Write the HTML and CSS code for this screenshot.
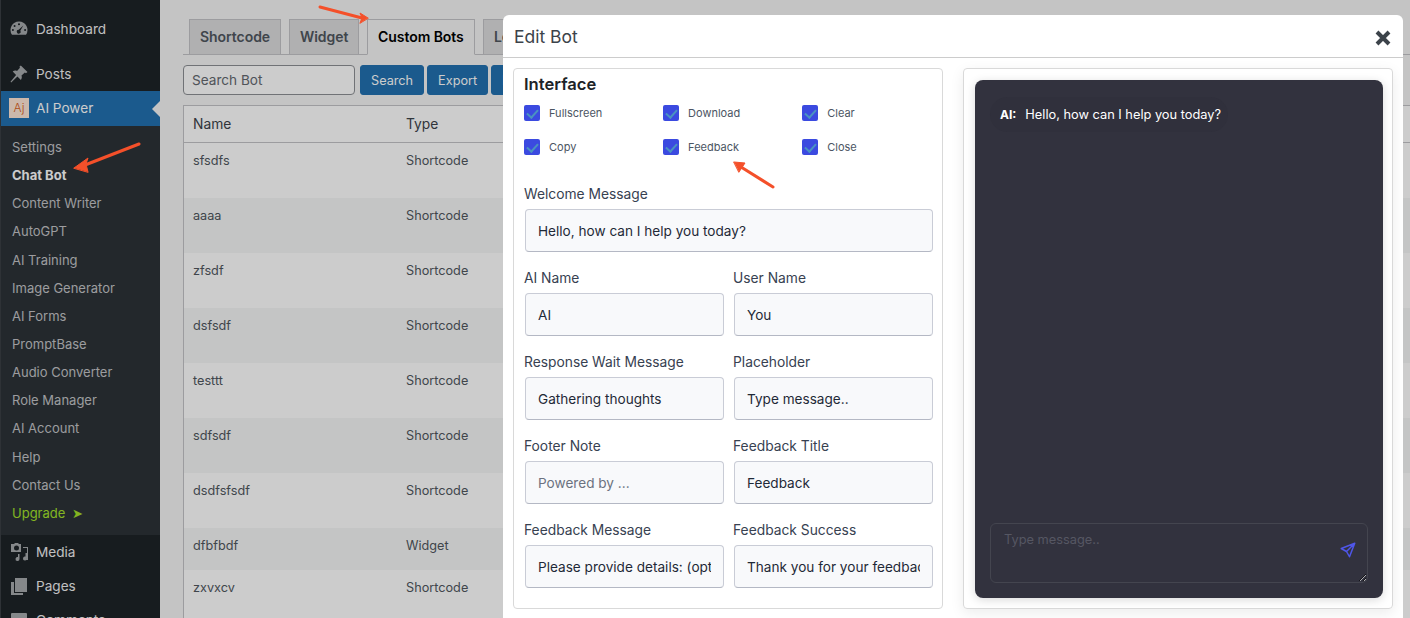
FILE: index.html
```html
<!DOCTYPE html>
<html lang="en">
<head>
    <meta charset="UTF-8">
    <title>Edit Bot</title>
    <link rel="stylesheet" href="styles.css">
</head>
<body>
    <div class="page">
        <div class="sidebar">
            <a class="menu-item first">
                <svg class="menu-icon" viewBox="0 0 20 20"><path d="M10 2.500a8.500 8.500 0 0 0-7 13.300h14A8.500 8.500 0 0 0 10 2.500zM10 4.200a1 1 0 1 1 0 2.100 1 1 0 0 1 0-2.100zM5.600 6a1 1 0 1 1 0 2 1 1 0 0 1 0-2zM14.300 6.500l-3 5.200a1.900 1.900 0 1 1-1.600-.9zM3.900 10a1 1 0 1 1 0 2 1 1 0 0 1 0-2zM16.100 10a1 1 0 1 1 0 2 1 1 0 0 1 0-2z"/></svg>
                Dashboard
            </a>
            <a class="menu-item posts">
                <svg class="menu-icon" viewBox="0 0 20 20"><path d="M11.800 1.500l6.700 6.600-1.600 1.100-1-.6-3.400 3c.6 1.700.4 3.100-.6 4.300l-3.500-3.500-6.200 6-.7-.7 5.600-6.700-3.400-3.400c1.200-1 2.700-1.300 4.300-.6l3-3.300-.6-1z"/></svg>
                Posts
            </a>
            <a class="menu-item active">
                <span class="plugin-logo">Aj</span>
                AI Power
            </a>
            <div class="submenu">
                <a>Settings</a>
                <a class="current">Chat Bot</a>
                <a>Content Writer</a>
                <a>AutoGPT</a>
                <a>AI Training</a>
                <a>Image Generator</a>
                <a>AI Forms</a>
                <a>PromptBase</a>
                <a>Audio Converter</a>
                <a>Role Manager</a>
                <a>AI Account</a>
                <a>Help</a>
                <a>Contact Us</a>
                <a class="upgrade">Upgrade<span class="upgrade-arrow">➤</span></a>
            </div>
            <a class="menu-item">
                <svg class="menu-icon" viewBox="0 0 20 20"><path d="M2 2h3l1-1h3l1 1h2v8H2zM7.500 3.500a2.500 2.500 0 1 0 0 5 2.500 2.500 0 0 0 0-5zM14 5h5v13h-2l1-1V6h-4zM18 11v5.500a2 2 0 1 1-1.500-1.900V11zM10.500 12v5a2 2 0 1 1-1.500-1.900V12z"/></svg>
                Media
            </a>
            <a class="menu-item">
                <svg class="menu-icon" viewBox="0 0 20 20"><path d="M6 2h12v14H6zM2 6h3v11h9v2H2z"/></svg>
                Pages
            </a>
            <a class="menu-item">
                <svg class="menu-icon" viewBox="0 0 20 20"><path d="M3 3h14a1 1 0 0 1 1 1v10a1 1 0 0 1-1 1h-6l-4 4v-4H3a1 1 0 0 1-1-1V4a1 1 0 0 1 1-1z"/></svg>
                Comments
            </a>
        </div>

        <div class="content">
            <div class="tabs">
                <a class="tab">Shortcode</a>
                <a class="tab">Widget</a>
                <a class="tab tab-active">Custom Bots</a>
                <a class="tab">Leads</a>
            </div>
            <div class="toolbar">
                <input class="search" type="text" placeholder="Search Bot">
                <button class="btn">Search</button>
                <button class="btn">Export</button>
                <button class="btn">Import</button>
            </div>
            <table class="bots">
                <thead>
                    <tr><th class="col-name">Name</th><th>Type</th></tr>
                </thead>
                <tbody>
                    <tr><td>sfsdfs</td><td>Shortcode</td></tr>
                    <tr><td>aaaa</td><td>Shortcode</td></tr>
                    <tr><td>zfsdf</td><td>Shortcode</td></tr>
                    <tr><td>dsfsdf</td><td>Shortcode</td></tr>
                    <tr><td>testtt</td><td>Shortcode</td></tr>
                    <tr><td>sdfsdf</td><td>Shortcode</td></tr>
                    <tr><td>dsdfsfsdf</td><td>Shortcode</td></tr>
                    <tr class="short"><td>dfbfbdf</td><td>Widget</td></tr>
                    <tr><td>zxvxcv</td><td>Shortcode</td></tr>
                </tbody>
            </table>
        </div>
    </div>

    <div class="overlay"></div>

    <div class="modal">
        <div class="modal-head">
            <span class="modal-title">Edit Bot</span>
            <svg class="modal-close" viewBox="0 0 18 18"><path d="M3 3l12 12M15 3L3 15"/></svg>
        </div>
        <div class="modal-body">
            <div class="panel form-panel">
                <h3>Interface</h3>
                <div class="checks">
                    <label class="check"><input type="checkbox" checked>Fullscreen</label>
                    <label class="check"><input type="checkbox" checked>Download</label>
                    <label class="check"><input type="checkbox" checked>Clear</label>
                    <label class="check"><input type="checkbox" checked>Copy</label>
                    <label class="check"><input type="checkbox" checked>Feedback</label>
                    <label class="check"><input type="checkbox" checked>Close</label>
                </div>
                <div class="fields">
                    <div class="field wide">
                        <label>Welcome Message</label>
                        <input type="text" value="Hello, how can I help you today?">
                    </div>
                    <div class="field">
                        <label>AI Name</label>
                        <input type="text" value="AI">
                    </div>
                    <div class="field">
                        <label>User Name</label>
                        <input type="text" value="You">
                    </div>
                    <div class="field">
                        <label>Response Wait Message</label>
                        <input type="text" value="Gathering thoughts">
                    </div>
                    <div class="field">
                        <label>Placeholder</label>
                        <input type="text" value="Type message..">
                    </div>
                    <div class="field">
                        <label>Footer Note</label>
                        <input type="text" placeholder="Powered by ...">
                    </div>
                    <div class="field">
                        <label>Feedback Title</label>
                        <input type="text" value="Feedback">
                    </div>
                    <div class="field">
                        <label>Feedback Message</label>
                        <input type="text" value="Please provide details: (optional)">
                    </div>
                    <div class="field">
                        <label>Feedback Success</label>
                        <input type="text" value="Thank you for your feedback!">
                    </div>
                </div>
            </div>
            <div class="panel preview-panel">
                <div class="chat">
                    <div class="chat-log">
                        <div class="bubble"><b>AI:</b>Hello, how can I help you today?</div>
                    </div>
                    <div class="chat-input">
                        <textarea placeholder="Type message.."></textarea>
                        <svg class="send" viewBox="0 0 24 24"><path d="M21 3L3 10l7 4 4 7zM21 3L10 14"/></svg>
                    </div>
                </div>
            </div>
        </div>
    </div>

    <!-- annotation arrows -->
    <svg class="arrows" viewBox="0 0 1410 618">
        <path d="M139 144L85 165"/><path class="head" d="M74 168L88 158 86 164 88 172z"/>
        <path d="M320 7L362 18"/><path class="head" d="M368 18L360 13 362 18 360 23z"/>
        <path d="M773 187L741 167"/><path class="head" d="M734 162L745 163 739 172z"/>
    </svg>
</body>
</html>
```

FILE: styles.css
```css
* {
    box-sizing: border-box;
}
html, body {
    margin: 0;
    height: 618px;
    overflow: hidden;
}
body {
    font-family: Inter, 'Liberation Sans', sans-serif;
    font-size: 13px;
    color: #3c434a;
    background-color: #f5f5f5;
}
.page {
    display: flex;
    height: 618px;
    overflow: hidden;
}

/* admin menu */
.sidebar {
    width: 160px;
    flex-shrink: 0;
    background-color: #1d2327;
    border-left: 1px solid #3a3f44;
    color: #f0f0f1;
}
.menu-item {
    display: flex;
    align-items: center;
    height: 34px;
    padding: 0 0 1px 8px;
    font-size: 13.6px;
    color: #f0f0f1;
}
.menu-item.first {
    margin-top: 12px;
}
.menu-item.posts {
    margin-top: 11px;
}
.menu-item.active {
    position: relative;
    height: 35px;
    padding-bottom: 1px;
    background-color: #2271b1;
    color: #fff;
}
.menu-item.active::after {
    content: "";
    position: absolute;
    right: 0;
    top: 10px;
    border: 8px solid transparent;
    border-right-color: #f5f5f5;
    border-left-width: 0;
}
.menu-icon {
    width: 20px;
    height: 20px;
    margin-right: 7px;
    fill: #a7aaad;
}
.plugin-logo {
    width: 20px;
    height: 20px;
    margin-right: 7px;
    background-color: #ffe6d6;
    color: #d9601a;
    font-size: 12px;
    font-weight: 300;
    line-height: 20px;
    text-align: center;
}
.submenu {
    display: flex;
    flex-direction: column;
    height: 409px;
    padding: 6.9px 0;
    background-color: #2c3338;
}
.submenu a {
    display: flex;
    align-items: center;
    height: 28.15px;
    flex-shrink: 0;
    padding-left: 11px;
    color: #c3c4c7;
}
.submenu a.current {
    color: #fff;
    font-weight: 700;
}
.submenu a.upgrade {
    color: #a5e22a;
}
.upgrade-arrow {
    margin-left: 7px;
}

/* page behind the modal */
.content {
    flex: 1;
    padding: 19px 0 0 23px;
    min-width: 0;
}
.tabs {
    display: flex;
    gap: 8px;
    height: 36px;
    padding-left: 6px;
    border-bottom: 1px solid #c3c4c7;
}
.tab {
    width: 92px;
    height: 36px;
    padding-left: 10px;
    border: 1px solid #c3c4c7;
    background-color: #dcdcde;
    color: #50575e;
    font-size: 14px;
    font-weight: 600;
    letter-spacing: -0.05px;
    line-height: 33px;
}
.tab:nth-child(2) {
    width: 70px;
}
.tab-active {
    width: 108px;
    background-color: #f5f5f5;
    border-bottom-color: #f5f5f5;
    color: #000;
}
.toolbar {
    display: flex;
    gap: 3px;
    margin-top: 10px;
}
.search {
    width: 172px;
    height: 30px;
    margin-right: 2px;
    padding: 0 8px;
    border: 1px solid #8c8f94;
    border-radius: 4px;
    background-color: #fff;
    font: 13.6px Inter, 'Liberation Sans', sans-serif;
}
.search::placeholder {
    color: #646970;
}
.btn {
    height: 30px;
    padding: 0 10px;
    border: 1px solid #2271b1;
    border-radius: 3px;
    background-color: #2271b1;
    color: #fff;
    font: 12.7px Inter, 'Liberation Sans', sans-serif;
}
.bots {
    width: 1300px;
    margin-top: 10px;
    border: 1px solid #c3c4c7;
    border-collapse: separate;
    border-spacing: 0;
    table-layout: fixed;
    background-color: #fff;
}
.bots th {
    height: 37px;
    padding: 0 10px 0 9px;
    border-bottom: 1px solid #c3c4c7;
    font-size: 13.8px;
    font-weight: 400;
    text-align: left;
    color: #3c434a;
}
.bots .col-name {
    width: 213px;
}
.bots td {
    height: 55px;
    padding: 9px 10px 8px 9px;
    vertical-align: top;
    font-size: 12.7px;
    line-height: 18px;
    color: #50575e;
}
.bots .short td {
    height: 42px;
}
.bots tbody tr:nth-child(even) {
    background-color: #f6f7f7;
}

/* modal */
.overlay {
    position: fixed;
    inset: 0;
    background-color: rgba(0, 0, 0, 0.2);
}
.modal {
    position: fixed;
    left: 503px;
    top: 15px;
    width: 900px;
    height: 640px;
    background-color: #fff;
    border-radius: 6px 6px 0 0;
}
.modal-head {
    display: flex;
    justify-content: space-between;
    align-items: center;
    height: 43px;
    padding: 0 11px;
    border-bottom: 1px solid #ccc;
}
.modal-title {
    font-size: 17.5px;
    color: #3c434a;
}
.modal-close {
    width: 18px;
    height: 18px;
    margin-top: 3px;
    fill: none;
    stroke: #3c434a;
    stroke-width: 4;
}
.modal-body {
    display: flex;
    gap: 20px;
    padding: 10px 10px 0;
}
.panel {
    width: 430px;
    height: 541px;
    border: 1px solid #d9d9d9;
    border-radius: 4px;
}
.form-panel {
    padding: 5px 10px;
}
.form-panel h3 {
    margin: 0 0 10px;
    font-size: 16.6px;
    font-weight: 600;
    line-height: 21px;
    color: #1d2327;
}

/* checkboxes */
.checks {
    display: grid;
    grid-template-columns: repeat(3, 139.1px);
    grid-auto-rows: 34px;
}
.check {
    display: flex;
    align-items: flex-start;
    gap: 9px;
    font-size: 11px;
    line-height: 16px;
    color: #4b5563;
}
.check input {
    appearance: none;
    position: relative;
    width: 16px;
    height: 16px;
    margin: 0;
    border-radius: 2px;
    background-color: #3b4ae0;
}
.check input::after {
    content: "";
    position: absolute;
    left: 5px;
    top: 2px;
    width: 5px;
    height: 9px;
    border: solid #4a93c0;
    border-width: 0 2px 2px 0;
    transform: rotate(42deg);
}

/* text fields */
.fields {
    display: grid;
    grid-template-columns: 1fr 1fr;
    column-gap: 10px;
    row-gap: 16px;
    margin-top: 11px;
}
.field.wide {
    grid-column: 1 / 3;
}
.field label {
    display: block;
    height: 20px;
    margin-bottom: 5px;
    font-size: 13.8px;
    line-height: 20px;
    color: #374151;
}
.field input {
    display: block;
    width: 100%;
    height: 43px;
    margin-left: 1px;
    padding: 0 12px;
    border: 1px solid #c9ccd6;
    border-bottom-color: #b4b8c4;
    border-radius: 4px;
    background-color: #f8f9fb;
    color: #1f2937;
    font: 13.6px Inter, 'Liberation Sans', sans-serif;
}
.field input::placeholder {
    color: #6b7280;
}

/* chat preview */
.preview-panel {
    padding: 11px;
    box-shadow: 0 4px 14px rgba(0, 0, 0, 0.08);
}
.chat {
    display: flex;
    flex-direction: column;
    justify-content: space-between;
    width: 408px;
    height: 518px;
    padding: 17px 15px 15px;
    border-radius: 8px;
    background-color: #32323e;
    box-shadow: 0 2px 10px rgba(0, 0, 0, 0.15);
}
.bubble {
    display: inline-block;
    height: 35px;
    padding: 0 7px 0 10px;
    border-radius: 18px;
    background-color: #30303c;
    color: #fff;
    font-size: 12.8px;
    line-height: 35px;
}
.bubble b {
    margin-right: 9px;
    font-size: 12px;
}
.chat-input {
    position: relative;
    height: 60px;
}
.chat-input textarea {
    display: block;
    width: 100%;
    height: 60px;
    padding: 8px 13px;
    border: 1px solid #44454f;
    border-radius: 6px;
    outline: none;
    background-color: #32323e;
    color: #fff;
    font: 12.8px Inter, 'Liberation Sans', sans-serif;
}
.chat-input textarea::placeholder {
    color: #565763;
}
.send {
    position: absolute;
    right: 11px;
    top: 18px;
    width: 18px;
    height: 18px;
    fill: none;
    stroke: #4f56e8;
    stroke-width: 2;
    stroke-linejoin: round;
}

/* annotation arrows */
.arrows {
    position: fixed;
    left: 0;
    top: 0;
    width: 1410px;
    height: 618px;
    fill: none;
    stroke: #f4502a;
    stroke-width: 3;
    stroke-linecap: round;
}
.arrows .head {
    fill: #f4502a;
    stroke-width: 1;
}
```
